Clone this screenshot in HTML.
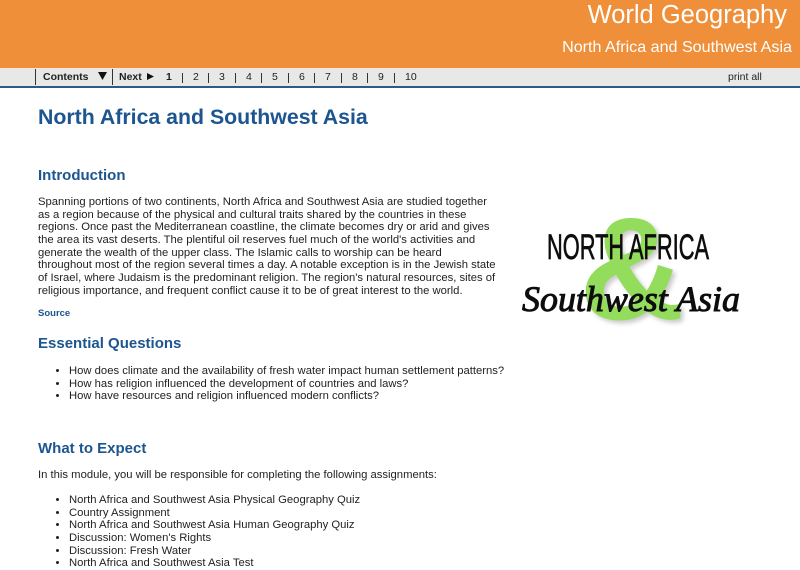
<!DOCTYPE html>
<html><head><meta charset="utf-8"><style>
html,body{margin:0;padding:0;background:#fff}
body{width:800px;height:570px;overflow:hidden;position:relative;font-family:"Liberation Sans",sans-serif;color:#222}
div{position:absolute;white-space:nowrap}
.hd{top:0;left:0;width:800px;height:68px;background:#ef8f3a}
.bar{top:68px;left:0;width:800px;height:18px;background:#e8e8e6;border-bottom:2px solid #2a5a8c}
.n{top:71px;font-size:10.5px;line-height:13px;color:#222}
.s{top:73px;width:1px;height:10px;background:#333}
h1,h2{position:absolute;margin:0;left:38px;color:#1c5590;font-weight:bold;white-space:nowrap}
h1{font-size:21.3px;line-height:26px;top:104px}
h2{font-size:15px;line-height:18px}
.p{left:38px;font-size:11.27px;line-height:12.65px}
ul{position:absolute;left:38px;margin:0;padding:0 0 0 31px;font-size:11.27px;line-height:12.65px;white-space:nowrap}
</style></head><body>
<div class="hd"></div>
<div style="right:13px;top:0;font-size:25.5px;line-height:30px;color:#fff">World Geography</div>
<div style="right:8px;top:38px;font-size:16.1px;line-height:18px;color:#fff">North Africa and Southwest Asia</div>
<div class="bar"></div>
<div style="left:35px;top:69px;width:1px;height:16px;background:#333"></div>
<div style="left:112px;top:69px;width:1px;height:16px;background:#333"></div>
<div class="n" style="left:43px;font-weight:bold">Contents</div>
<svg style="position:absolute;left:98px;top:72px" width="10" height="9"><path d="M0 0H9L4.5 8Z" fill="#111"/></svg>
<div class="n" style="left:119px;font-weight:bold">Next</div>
<svg style="position:absolute;left:147px;top:73px" width="8" height="8"><path d="M0 0L7 3.5L0 7Z" fill="#111"/></svg>
<div class="n" style="left:166px;font-weight:bold">1</div><div class="s" style="left:182px"></div>
<div class="n" style="left:193px">2</div><div class="s" style="left:208px"></div>
<div class="n" style="left:219px">3</div><div class="s" style="left:235px"></div>
<div class="n" style="left:246px">4</div><div class="s" style="left:261px"></div>
<div class="n" style="left:272px">5</div><div class="s" style="left:288px"></div>
<div class="n" style="left:299px">6</div><div class="s" style="left:314px"></div>
<div class="n" style="left:325px">7</div><div class="s" style="left:341px"></div>
<div class="n" style="left:352px">8</div><div class="s" style="left:367px"></div>
<div class="n" style="left:378px">9</div><div class="s" style="left:394px"></div>
<div class="n" style="left:405px">10</div>
<div class="n" style="left:728px">print all</div>

<h1>North Africa and Southwest Asia</h1>
<h2 style="top:167px">Introduction</h2>
<div class="p" style="top:196px">Spanning portions of two continents, North Africa and Southwest Asia are studied together<br>as a region because of the physical and cultural traits shared by the countries in these<br>regions. Once past the Mediterranean coastline, the climate becomes dry or arid and gives<br>the area its vast deserts. The plentiful oil reserves fuel much of the world's activities and<br>generate the wealth of the upper class. The Islamic calls to worship can be heard<br>throughout most of the region several times a day. A notable exception is in the Jewish state<br>of Israel, where Judaism is the predominant religion. The region's natural resources, sites of<br>religious importance, and frequent conflict cause it to be of great interest to the world.</div>
<div style="left:38px;top:308px;font-size:9.5px;line-height:12px;font-weight:bold;color:#1c5590">Source</div>
<h2 style="top:335px">Essential Questions</h2>
<ul style="top:365px"><li>How does climate and the availability of fresh water impact human settlement patterns?</li><li>How has religion influenced the development of countries and laws?</li><li>How have resources and religion influenced modern conflicts?</li></ul>
<h2 style="top:440px">What to Expect</h2>
<div class="p" style="top:469px">In this module, you will be responsible for completing the following assignments:</div>
<ul style="top:494px"><li>North Africa and Southwest Asia Physical Geography Quiz</li><li>Country Assignment</li><li>North Africa and Southwest Asia Human Geography Quiz</li><li>Discussion: Women's Rights</li><li>Discussion: Fresh Water</li><li>North Africa and Southwest Asia Test</li></ul>

<svg style="position:absolute;left:510px;top:205px" width="240" height="140" viewBox="0 0 240 140">
<defs><filter id="b"><feGaussianBlur stdDeviation="2"/></filter><filter id="c"><feGaussianBlur stdDeviation=".35"/></filter></defs>
<text x="125" y="117" text-anchor="middle" font-family="Liberation Sans" font-weight="bold" font-size="146" fill="#555" opacity=".3" filter="url(#b)">&amp;</text>
<text x="122" y="114" text-anchor="middle" font-family="Liberation Sans" font-weight="bold" font-size="146" fill="#93dc5c">&amp;</text>
<g filter="url(#c)">
<text x="37" y="54" font-family="Liberation Sans" font-size="35" fill="#111" stroke="#111" stroke-width=".7" textLength="162" lengthAdjust="spacingAndGlyphs">NORTH AFRICA</text>
<text x="12" y="106" font-family="Liberation Serif" font-style="italic" font-size="36" fill="#111" stroke="#111" stroke-width="1" textLength="218" lengthAdjust="spacingAndGlyphs">Southwest Asia</text>
</g>
</svg>
</body></html>
